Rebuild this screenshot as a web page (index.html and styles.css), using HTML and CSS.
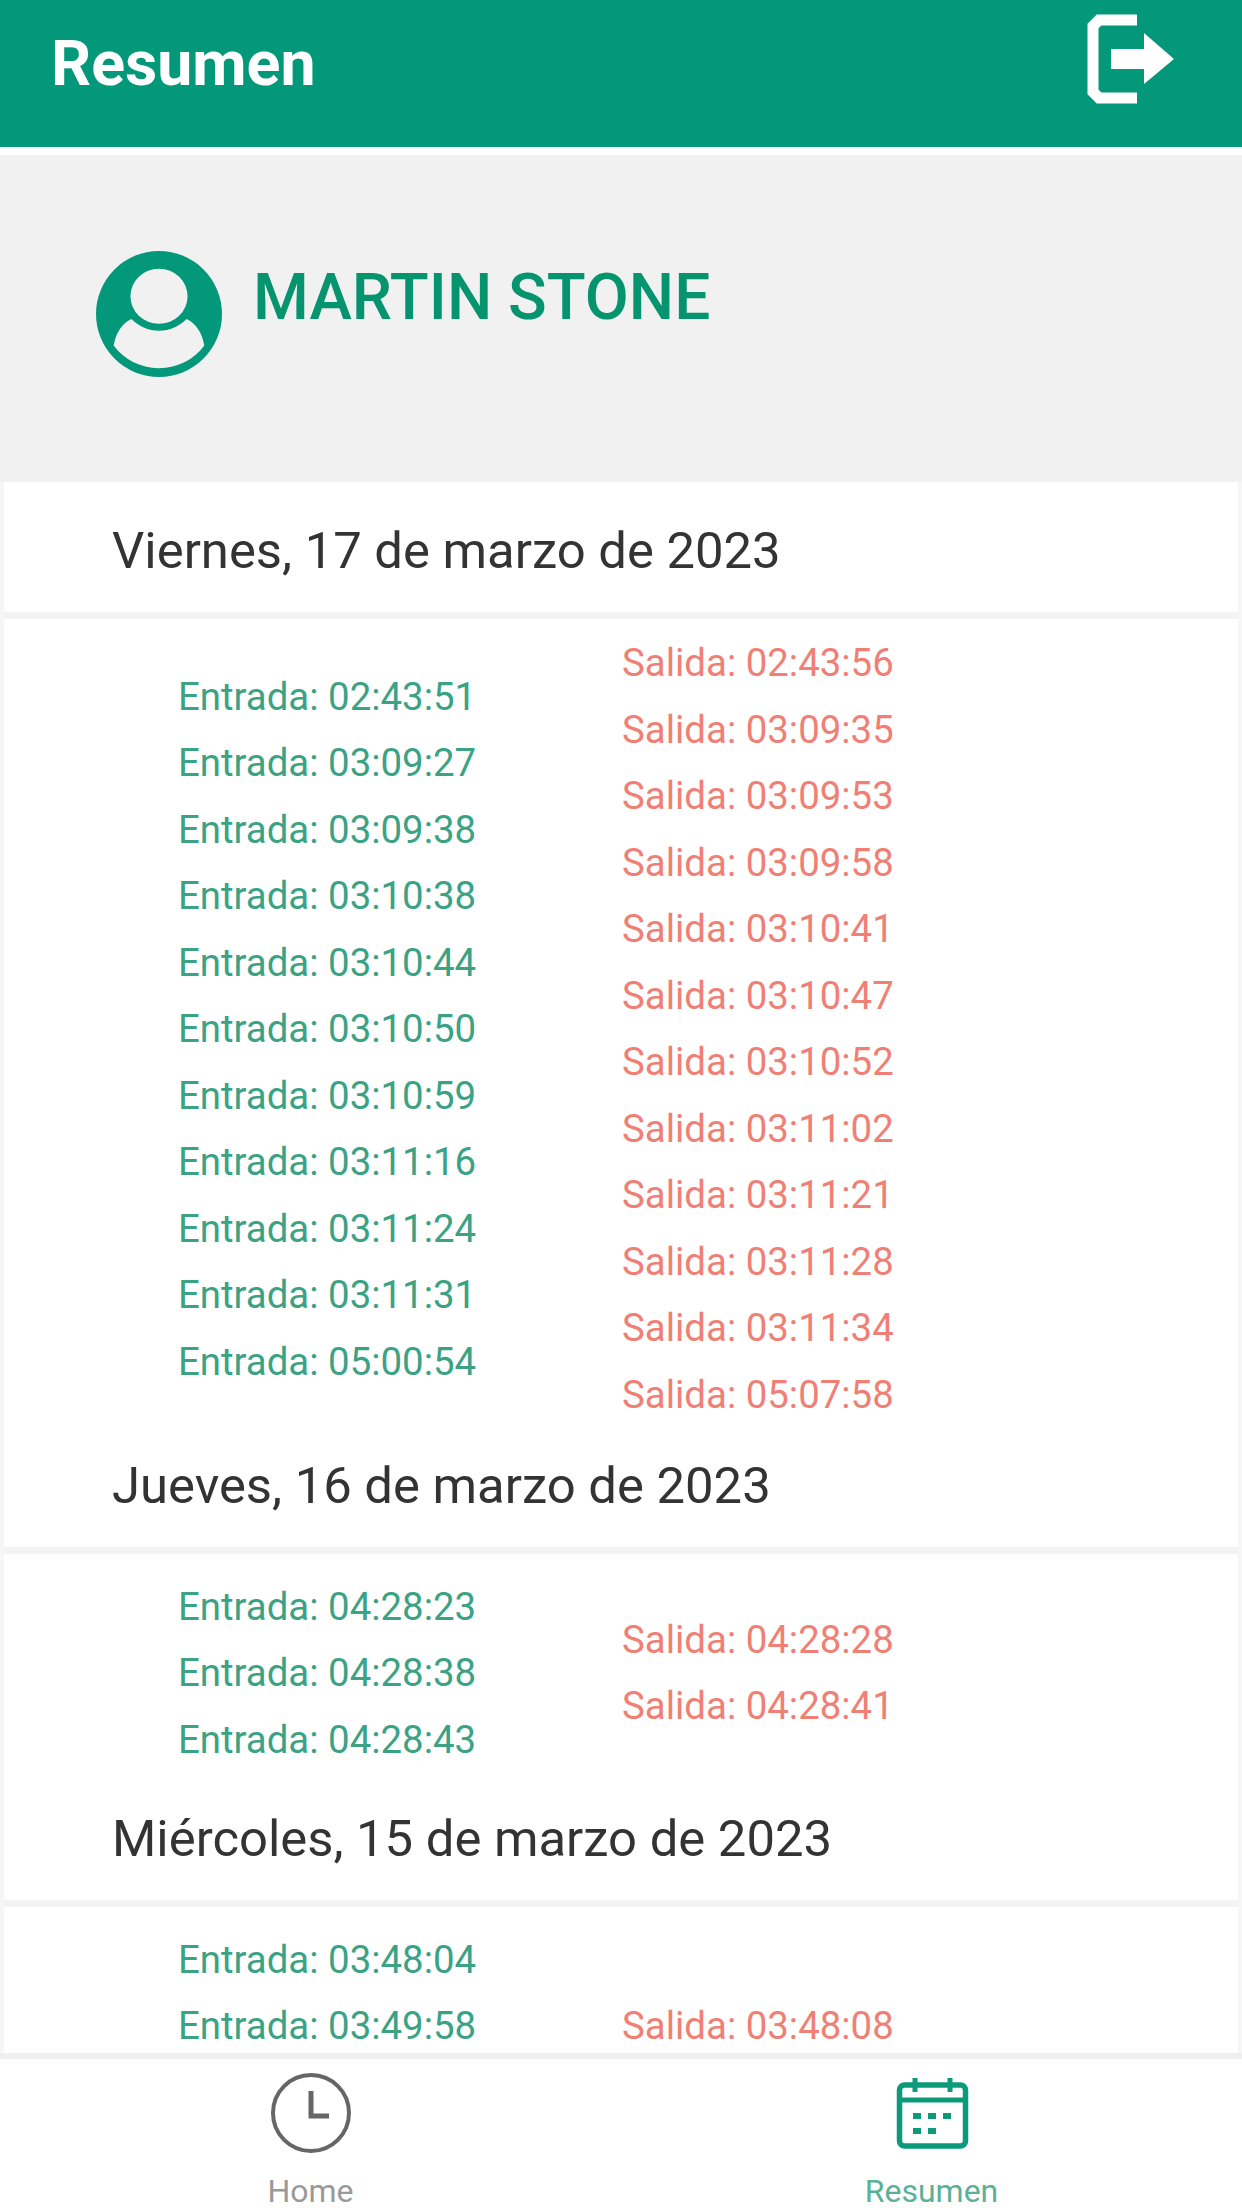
FILE: index.html
```html
<!DOCTYPE html>
<html lang="es">
  <head>
    <meta charset="UTF-8" />
    <meta name="viewport" content="width=device-width, initial-scale=1.0" />
    <title>Resumen</title>
    <link rel="stylesheet" href="styles.css">
  </head>

  <body>
    <header class="barra">
      <h1>Resumen</h1>
      <svg class="salir" viewBox="0 0 88 90">
        <path d="M50 6H12L6 12V78L12 84H50" fill="none" stroke="#fff" stroke-width="11" />
        <path d="M24 35H57V19L87 45L57 70V55H24Z" fill="#fff" />
      </svg>
    </header>

    <section class="perfil">
      <svg class="avatar" viewBox="0 0 128 128">
        <circle cx="64" cy="64" r="64" fill="#029879" />
        <path d="M36 69C27 73 20 83 18 96C28 110 45 119 64 119S100 110 110 96C108 83 101 73 92 69C85 76 75 81 64 81S43 76 36 69Z" fill="#f1f1f1" />
        <ellipse cx="64" cy="46" rx="29" ry="28" fill="#f1f1f1" />
      </svg>
      <h2>MARTIN STONE</h2>
    </section>

    <main class="lista">
      <h3>Viernes, 17 de marzo de 2023</h3>
      <div class="dia dia-viernes">
        <ul class="entradas">
          <li>Entrada: 02:43:51</li>
          <li>Entrada: 03:09:27</li>
          <li>Entrada: 03:09:38</li>
          <li>Entrada: 03:10:38</li>
          <li>Entrada: 03:10:44</li>
          <li>Entrada: 03:10:50</li>
          <li>Entrada: 03:10:59</li>
          <li>Entrada: 03:11:16</li>
          <li>Entrada: 03:11:24</li>
          <li>Entrada: 03:11:31</li>
          <li>Entrada: 05:00:54</li>
        </ul>
        <ul class="salidas">
          <li>Salida: 02:43:56</li>
          <li>Salida: 03:09:35</li>
          <li>Salida: 03:09:53</li>
          <li>Salida: 03:09:58</li>
          <li>Salida: 03:10:41</li>
          <li>Salida: 03:10:47</li>
          <li>Salida: 03:10:52</li>
          <li>Salida: 03:11:02</li>
          <li>Salida: 03:11:21</li>
          <li>Salida: 03:11:28</li>
          <li>Salida: 03:11:34</li>
          <li>Salida: 05:07:58</li>
        </ul>
      </div>

      <h3>Jueves, 16 de marzo de 2023</h3>
      <div class="dia">
        <ul class="entradas">
          <li>Entrada: 04:28:23</li>
          <li>Entrada: 04:28:38</li>
          <li>Entrada: 04:28:43</li>
        </ul>
        <ul class="salidas">
          <li>Salida: 04:28:28</li>
          <li>Salida: 04:28:41</li>
        </ul>
      </div>

      <h3>Miércoles, 15 de marzo de 2023</h3>
      <div class="dia dia-miercoles">
        <ul class="entradas">
          <li>Entrada: 03:48:04</li>
          <li>Entrada: 03:49:58</li>
        </ul>
        <ul class="salidas">
          <li>Salida: 03:48:08</li>
        </ul>
      </div>
    </main>

    <nav class="menu">
      <a class="opcion">
        <svg viewBox="0 0 82 82">
          <circle cx="41" cy="41" r="38" fill="none" stroke="#666" stroke-width="4" />
          <path d="M41 19V44H59" fill="none" stroke="#666" stroke-width="5" />
        </svg>
        <span>Home</span>
      </a>
      <a class="opcion activa">
        <svg viewBox="0 0 82 82">
          <g fill="none" stroke="#0b9b7b">
            <rect x="8.5" y="13" width="66" height="61" rx="5" stroke-width="5.5" />
            <path d="M8 28H74" stroke-width="5" />
            <path d="M24 6V20M59 6V20" stroke-width="5" />
          </g>
          <path d="M22 41h8v6h-8zM37 41h8v6h-8zM52 41h8v6h-8zM22 56h8v6h-8zM37 56h8v6h-8z" fill="#0b9b7b" />
        </svg>
        <span>Resumen</span>
      </a>
    </nav>
  </body>
</html>
```
FILE: styles.css
```css
* {
  box-sizing: border-box;
}

body {
  margin: 0;
  height: 2208px;
  display: flex;
  flex-direction: column;
  overflow: hidden;
  background-color: #fff;
  font-family: Roboto, "Liberation Sans", sans-serif;
}

h1,
h2,
h3,
ul {
  margin: 0;
  padding: 0;
  font-weight: 400;
  list-style: none;
}

/* Barra superior */
.barra {
  flex: none;
  display: flex;
  justify-content: space-between;
  height: 147px;
  padding: 14px 67px 0 51px;
  background-color: #029879;
  color: #fff;
}

.barra h1 {
  padding-top: 12px;
  font-size: 62.7px;
  font-weight: 700;
  line-height: 76px;
}

.salir {
  width: 88px;
  height: 90px;
}

/* Datos del usuario */
.perfil {
  flex: none;
  display: flex;
  height: 327px;
  margin-top: 8px;
  padding: 96px 0 0 96px;
  background-color: #f1f1f1;
}

.avatar {
  width: 126px;
  height: 126px;
}

.perfil h2 {
  padding-left: 31px;
  color: #06946e;
  font-size: 63.9px;
  font-weight: 500;
  line-height: 93px;
}

/* Registros por dia */
.lista {
  flex: 1;
  min-height: 0;
  overflow: hidden;
  border: solid #f6f6f6;
  border-width: 0 4px;
}

.lista h3 {
  height: 137px;
  padding-left: 108px;
  border-bottom: 7px solid #f3f3f3;
  color: #333;
  font-size: 50.8px;
  line-height: 138px;
}

.dia {
  display: flex;
  align-items: center;
  height: 216px;
  padding: 22px 0 0 174px;
  font-size: 38.4px;
  line-height: 44px;
}

.dia-viernes {
  height: 798px;
}

.entradas,
.salidas {
  display: flex;
  flex-direction: column;
  gap: 22.5px;
}

.entradas {
  width: 444px;
  color: #3ba284;
}

.salidas {
  color: #f07f75;
}

/* Hueco de la tercera entrada, queda debajo del menu */
.dia-miercoles .entradas {
  padding-bottom: 66px;
}

/* Menu inferior */
.menu {
  flex: none;
  display: flex;
  height: 155px;
  border-top: 6px solid #efefef;
}

.opcion {
  flex: 1;
  display: flex;
  flex-direction: column;
  align-items: center;
  padding-top: 13px;
  color: #999;
  font-size: 32px;
}

.opcion svg {
  flex: none;
  width: 82px;
  height: 82px;
}

.opcion span {
  margin-top: 20px;
  line-height: 34px;
}

.activa {
  color: #5bb196;
}
```
